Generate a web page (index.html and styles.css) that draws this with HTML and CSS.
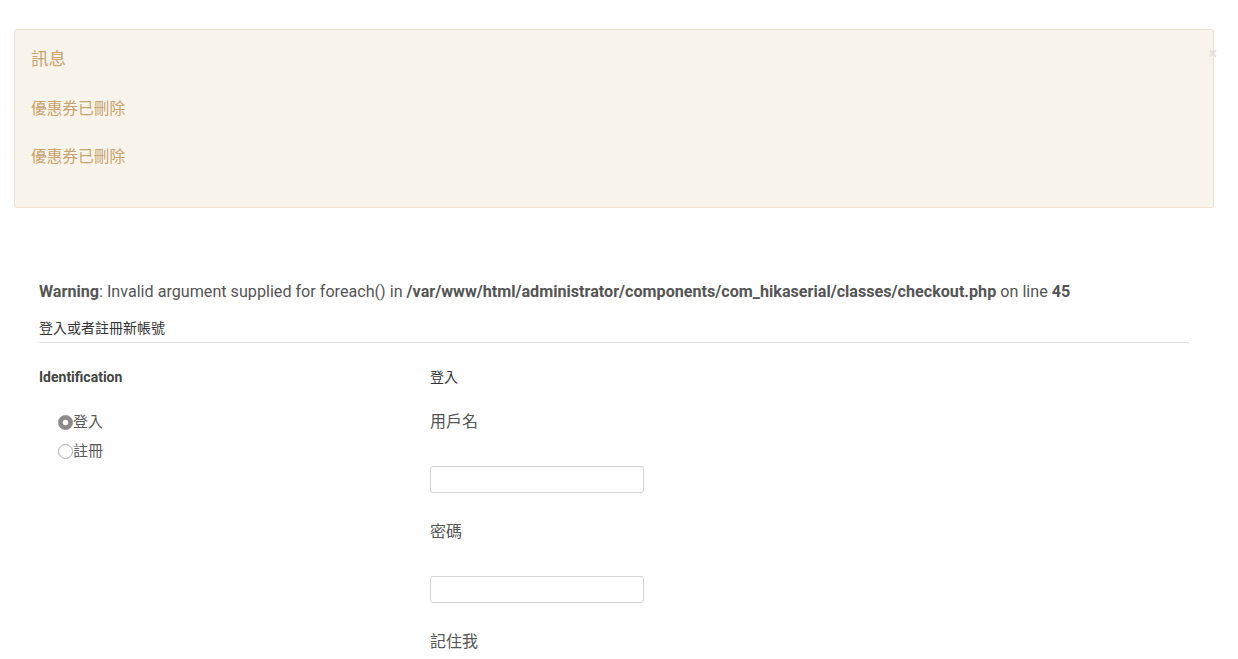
FILE: index.html
```html
<!DOCTYPE html>
<html lang="zh-Hant">
<head>
    <meta charset="UTF-8">
    <meta name="viewport" content="width=device-width, initial-scale=1.0">
    <title>登入或者註冊新帳號</title>
    <link rel="stylesheet" href="styles.css">
</head>
<body>
    <div class="alert">
        <a class="close" href="#">&times;</a>
        <h4 class="alert-heading">訊息</h4>
        <p>優惠券已刪除</p>
        <p>優惠券已刪除</p>
    </div>

    <div class="checkout">
        <p class="php-warning"><b>Warning</b>: Invalid argument supplied for foreach() in <b>/var/www/html/administrator/components/com_hikaserial/classes/checkout.php</b> on line <b>45</b></p>

        <h2 class="section-title">登入或者註冊新帳號</h2>

        <div class="login-grid">
            <div class="identification">
                <h3>Identification</h3>
                <label class="radio"><input type="radio" name="login_registration" checked>登入</label>
                <label class="radio"><input type="radio" name="login_registration">註冊</label>
            </div>

            <div class="login-form">
                <h3>登入</h3>
                <div class="form-group">
                    <label for="username">用戶名</label>
                    <input type="text" id="username">
                </div>
                <div class="form-group">
                    <label for="passwd">密碼</label>
                    <input type="password" id="passwd">
                </div>
                <div class="form-group">
                    <label for="remember">記住我</label>
                </div>
            </div>
        </div>
    </div>
</body>
</html>
```

FILE: styles.css
```css
:root {
    --alert-bg: #f8f3eb;
    --alert-border: #eee2cf;
    --alert-text: #c9a36b;
    --text-color: #555555;
    --border-color: #dddddd;
}

body {
    font-family: Roboto, "Noto Sans CJK TC", sans-serif;
    color: var(--text-color);
    background: #ffffff;
    margin: 0;
    padding: 29px 24px 0 14px;
}

/* Message box */
.alert {
    position: relative;
    background-color: var(--alert-bg);
    border: 1px solid var(--alert-border);
    border-radius: 3px;
    color: var(--alert-text);
    padding: 17px 16px 26px;
    height: 134px;
}

.alert-heading {
    margin: 0 0 26px;
    font-size: 17.5px;
    font-weight: normal;
    line-height: 24px;
}

.alert p {
    margin: 0 0 24px;
    font-size: 15.7px;
    line-height: 24px;
}

.close {
    position: absolute;
    top: 14px;
    right: -4px;
    color: #e6e0d8;
    font-size: 16px;
    font-weight: bold;
    text-decoration: none;
    line-height: 20px;
}

/* Checkout */
.checkout {
    padding: 74px 25px 0;
}

.php-warning {
    margin: 0 0 17px;
    font-size: 16.15px;
    line-height: 20px;
}

.php-warning b {
    font-weight: bold;
}

.section-title {
    margin: 0;
    padding-bottom: 5px;
    font-size: 14px;
    font-weight: normal;
    line-height: 18px;
    color: #333333;
    border-bottom: 1px solid var(--border-color);
}

.login-grid {
    display: grid;
    grid-template-columns: 391px 1fr;
    padding-top: 24px;
}

h3 {
    margin: 0 0 24px;
    font-size: 14px;
    line-height: 20px;
    font-weight: bold;
    color: #444444;
}

.identification h3 {
    margin-bottom: 21px;
}

.login-form h3 {
    font-weight: normal;
    color: #333333;
}

.radio {
    display: flex;
    align-items: center;
    margin-left: 19px;
    font-size: 15px;
    line-height: 29px;
    color: #5a5a5a;
}

/* grey disc radios */
.radio input {
    appearance: none;
    -webkit-appearance: none;
    box-sizing: border-box;
    width: 15px;
    height: 15px;
    margin: 0;
    border: 1px solid #a9a9a9;
    border-radius: 50%;
    background: #ffffff;
}

.radio input:checked {
    border-color: #8a8a8a;
    background: radial-gradient(circle, #ffffff 0 2.5px, #8a8a8a 3.2px);
}

.form-group label {
    display: block;
    font-size: 16px;
    line-height: 22px;
    color: #555555;
    margin-bottom: 33px;
}

.form-group input {
    display: block;
    box-sizing: border-box;
    width: 214px;
    height: 27px;
    margin: 0 0 28px;
    border: 1px solid #d4d4d4;
    border-radius: 3px;
    padding: 4px 6px;
    font-size: 14px;
}
```
